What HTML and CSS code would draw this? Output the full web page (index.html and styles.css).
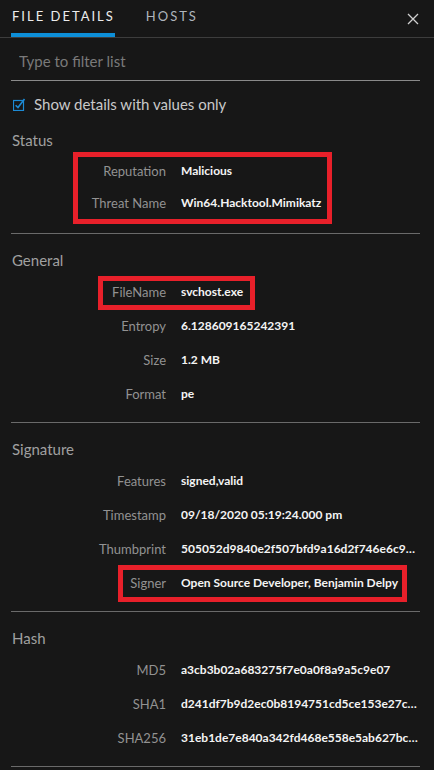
FILE: index.html
```html
<!DOCTYPE html>
<html lang="en">
<head>
  <meta charset="UTF-8">
  <title>File Details</title>
  <link rel="stylesheet" href="styles.css">
</head>
<body>
  <div class="tabs">
    <span class="tab active">FILE DETAILS</span>
    <span class="tab">HOSTS</span>
    <svg class="close" width="12" height="12" viewBox="0 0 12 12">
      <path d="M1 1 L11 11 M11 1 L1 11" stroke="#d0d0d0" stroke-width="1.3" fill="none"/>
    </svg>
  </div>

  <div class="filter">
    <input type="text" placeholder="Type to filter list">
  </div>

  <label class="check">
    <svg width="13" height="13" viewBox="0 0 13 13">
      <rect x="0.5" y="2.5" width="10" height="10" stroke="#1d8ad4" stroke-width="1.2" fill="none"/>
      <path d="M2.6 7.2 L5 9.6 L11.5 1" stroke="#1d8ad4" stroke-width="1.6" fill="none"/>
    </svg>
    Show details with values only
  </label>

  <!-- Status -->
  <div class="section first">
    <div class="heading">Status</div>
    <div class="rows tight">
      <div class="row"><span class="key">Reputation</span><span class="val">Malicious</span></div>
      <div class="row"><span class="key">Threat Name</span><span class="val">Win64.Hacktool.Mimikatz</span></div>
      <div class="mark mark-status"></div>
    </div>
  </div>

  <!-- General -->
  <div class="section">
    <div class="heading">General</div>
    <div class="rows">
      <div class="row"><span class="key">FileName</span><span class="val">svchost.exe</span></div>
      <div class="row"><span class="key">Entropy</span><span class="val">6.128609165242391</span></div>
      <div class="row"><span class="key">Size</span><span class="val">1.2 MB</span></div>
      <div class="row"><span class="key">Format</span><span class="val">pe</span></div>
      <div class="mark mark-file"></div>
    </div>
  </div>

  <!-- Signature -->
  <div class="section">
    <div class="heading">Signature</div>
    <div class="rows">
      <div class="row"><span class="key">Features</span><span class="val">signed,valid</span></div>
      <div class="row"><span class="key">Timestamp</span><span class="val">09/18/2020 05:19:24.000 pm</span></div>
      <div class="row"><span class="key">Thumbprint</span><span class="val">505052d9840e2f507bfd9a16d2f746e6c9a4e13f</span></div>
      <div class="row"><span class="key">Signer</span><span class="val">Open Source Developer, Benjamin Delpy</span></div>
      <div class="mark mark-signer"></div>
    </div>
  </div>

  <!-- Hash -->
  <div class="section">
    <div class="heading">Hash</div>
    <div class="rows">
      <div class="row"><span class="key">MD5</span><span class="val">a3cb3b02a683275f7e0a0f8a9a5c9e07</span></div>
      <div class="row"><span class="key">SHA1</span><span class="val">d241df7b9d2ec0b8194751cd5ce153e27c99d4a2</span></div>
      <div class="row"><span class="key">SHA256</span><span class="val">31eb1de7e840a342fd468e558e5ab627bc0a6b9f3e0f4e2a1c7d18e6a3b0c541</span></div>
    </div>
  </div>
</body>
</html>
```

FILE: styles.css
```css
body {
  margin: 0;
  background-color: #171717;
  font-family: Lato, "Noto Sans", sans-serif;
  color: #d0d0d0;
  overflow: hidden;
}

.tabs {
  display: flex;
  align-items: flex-start;
  height: 37px;
  border-bottom: 1px solid #3d3d3d;
  padding-left: 11px;
}

.tab {
  height: 33px;
  line-height: 33px;
  font-size: 13px;
  letter-spacing: 2px;
  color: #aeb5bc;
  margin-right: 30px;
  padding-left: 1px;
  border-bottom: 4px solid transparent;
}

.tab.active {
  color: #ececec;
  border-bottom-color: #0d8fd8;
}

.close {
  margin-left: auto;
  margin-right: 15px;
  margin-top: 13px;
}

.filter {
  padding: 7px 14px 0 11px;
}

.filter input {
  width: 100%;
  box-sizing: border-box;
  height: 36px;
  border: none;
  border-bottom: 1px solid #8a8a8a;
  background: transparent;
  font-family: Lato, "Noto Sans", sans-serif;
  font-size: 15px;
  color: #ddd;
  padding: 0 0 4px 8px;
  outline: none;
}

.filter input::placeholder {
  color: #7a7a7a;
}

.check {
  display: flex;
  align-items: center;
  gap: 8px;
  height: 20px;
  margin: 13px 0 0 13px;
  font-size: 15px;
  color: #c9c9c9;
}

.section {
  margin: 0 14px 0 11px;
  padding-bottom: 11px;
  border-bottom: 1px solid #6a6a6a;
}

.heading {
  margin-top: 16px;
  height: 20px;
  line-height: 20px;
  font-size: 15px;
  color: #a0a0a0;
  padding-left: 1px;
}

.rows {
  position: relative;
  margin-top: 5px;
}

.row {
  display: grid;
  grid-template-columns: 155px 1fr;
  column-gap: 15px;
  height: 34px;
  line-height: 34px;
}

.rows.tight .row {
  height: 32px;
  line-height: 32px;
}

.section.first {
  padding-bottom: 14px;
}

.key {
  text-align: right;
  font-size: 13px;
  color: #929292;
}

.val {
  font-size: 12px;
  font-weight: bold;
  color: #f4f4f4;
  white-space: nowrap;
  overflow: hidden;
  text-overflow: ellipsis;
  padding-right: 2px;
}

/* red annotation boxes drawn over the rows */
.mark {
  position: absolute;
  border: 5px solid #e8202a;
  box-sizing: border-box;
}

.mark-status {
  left: 62px;
  top: -3px;
  width: 259px;
  height: 72px;
}

.mark-file {
  left: 87px;
  top: 1px;
  width: 157px;
  height: 34px;
}

.mark-signer {
  left: 107px;
  top: 101px;
  width: 289px;
  height: 37px;
}
```
